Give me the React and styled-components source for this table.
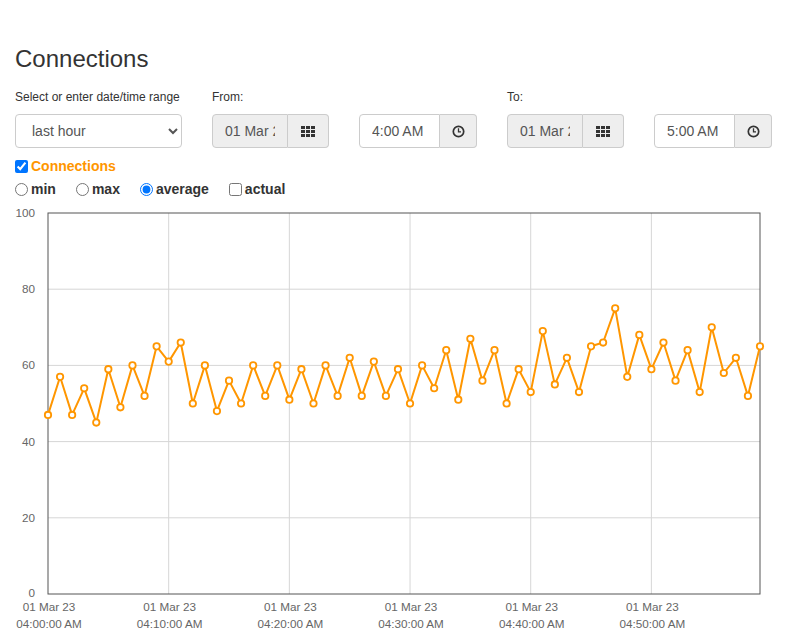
import React from 'react'
import styled, { createGlobalStyle } from 'styled-components'

const GlobalStyle = createGlobalStyle`
  body {
    margin: 0;
    background: #fff;
    color: #333;
    font-family: "Liberation Sans", Arial, sans-serif;
    font-size: 14px;
  }
`

const ORANGE = '#ff9600'

// one sample per minute, 04:00 .. 04:59
const values = [
  47, 57, 47, 54, 45, 59, 49, 60, 52, 65,
  61, 66, 50, 60, 48, 56, 50, 60, 52, 60,
  51, 59, 50, 60, 52, 62, 52, 61, 52, 59,
  50, 60, 54, 64, 51, 67, 56, 64, 50, 59,
  53, 69, 55, 62, 53, 65, 66, 75, 57, 68,
  59, 66, 56, 64, 53, 70, 58, 62, 52, 65,
]

const chart = {
  width: 757,
  height: 431,
  left: 33,
  right: 745,
  top: 10,
  bottom: 391,
}

const Page = styled.div`
  padding: 46px 15px 0;
`

const Title = styled.h2`
  margin: 0 0 17px;
  font-size: 24px;
  font-weight: 400;
  line-height: 26px;
  color: #333;
`

const Controls = styled.div`
  display: flex;
  align-items: flex-end;
  gap: 30px;
`

const Field = styled.div`
  display: flex;
  flex-direction: column;
`

const Label = styled.label`
  font-size: 12px;
  line-height: 17px;
  margin-bottom: 8px;
`

const Select = styled.select`
  width: 167px;
  height: 34px;
  box-sizing: border-box;
  padding: 6px 12px;
  border: 1px solid #ccc;
  border-radius: 4px;
  background: #fff;
  color: #555;
  font-family: inherit;
  font-size: 14px;
`

const InputGroup = styled.div`
  display: flex;
  height: 34px;
`

const Input = styled.input`
  width: ${p => p.$w}px;
  height: 34px;
  box-sizing: border-box;
  padding: 6px 12px;
  border: 1px solid #ccc;
  border-radius: 4px 0 0 4px;
  background: ${p => (p.$grey ? '#eee' : '#fff')};
  color: #555;
  font-family: inherit;
  font-size: 14px;
  outline: none;
`

const Addon = styled.span`
  width: ${p => p.$w}px;
  height: 34px;
  box-sizing: border-box;
  display: flex;
  align-items: center;
  justify-content: center;
  border: 1px solid #ccc;
  border-left: none;
  border-radius: 0 4px 4px 0;
  background: #eee;
  color: #333;
`

const SeriesRow = styled.div`
  display: flex;
  align-items: center;
  height: 20px;
  margin-top: 8px;
`

const Box = styled.input`
  width: 13px;
  height: 13px;
  margin: 0 3px 0 0;
`

const SeriesName = styled.label`
  color: ${ORANGE};
  font-weight: 700;
`

const Options = styled.div`
  display: flex;
  align-items: center;
  gap: 20px;
  height: 20px;
  margin-top: 3px;
`

const Option = styled.label`
  display: flex;
  align-items: center;
  font-weight: 700;
  color: #333;
`

const ChartSvg = styled.svg`
  display: block;
  margin-top: 4px;
  font-family: "Liberation Sans", Arial, sans-serif;
  font-size: 11.7px;
`

const GridIcon = () => (
  <svg width="14" height="11" viewBox="0 0 14 11">
    {[0, 1, 2].map(r =>
      [0, 1, 2].map(c => (
        <rect key={`${r}${c}`} x={c * 5} y={r * 4} width="4" height="3" fill="#333" />
      ))
    )}
  </svg>
)

const ClockIcon = () => (
  <svg width="13" height="13" viewBox="0 0 13 13">
    <circle cx="6.5" cy="6.5" r="5.2" fill="none" stroke="#333" strokeWidth="1.7" />
    <path d="M6.5 3.3 V6.8 H9" fill="none" stroke="#333" strokeWidth="1.3" />
  </svg>
)

function DateTime({ label, date, time }) {
  return (
    <>
      <Field>
        <Label>{label}</Label>
        <InputGroup>
          <Input $w={76} $grey readOnly value={date} />
          <Addon $w={41}><GridIcon /></Addon>
        </InputGroup>
      </Field>
      <Field>
        <InputGroup>
          <Input $w={81} readOnly value={time} />
          <Addon $w={37}><ClockIcon /></Addon>
        </InputGroup>
      </Field>
    </>
  )
}

function Chart() {
  const { left, right, top, bottom } = chart
  const px = i => left + (i * (right - left)) / (values.length - 1)
  const py = v => top + ((100 - v) * (bottom - top)) / 100
  const path = values.map((v, i) => `${i ? 'L' : 'M'}${px(i).toFixed(1)} ${py(v).toFixed(1)}`).join(' ')
  const ticks = [0, 10, 20, 30, 40, 50]

  return (
    <ChartSvg width={chart.width} height={chart.height}>
      {[20, 40, 60, 80].map(v => (
        <line key={v} x1={left} x2={right} y1={py(v)} y2={py(v)} stroke="#d6d6d6" />
      ))}
      {ticks.slice(1).map(m => (
        <line key={m} x1={px(m)} x2={px(m)} y1={top} y2={bottom} stroke="#d6d6d6" />
      ))}
      <rect x={left} y={top} width={right - left} height={bottom - top} fill="none" stroke="#555" />
      {[0, 20, 40, 60, 80, 100].map(v => (
        <text key={v} x={20} y={py(v) - (v === 0 ? 1 : 0)} dy="0.35em" textAnchor="end" fill="#666">{v}</text>
      ))}
      {ticks.map(m => (
        <g key={m} fill="#666" textAnchor="middle">
          <text x={px(m) + 1} y={bottom + 17}>01 Mar 23</text>
          <text x={px(m) + 1} y={bottom + 34}>{`04:${String(m).padStart(2, '0')}:00 AM`}</text>
        </g>
      ))}
      <path d={path} fill="none" stroke={ORANGE} strokeWidth="2" strokeLinejoin="round" />
      {values.map((v, i) => (
        <circle key={i} cx={px(i)} cy={py(v)} r="3.2" fill="#fff" stroke={ORANGE} strokeWidth="1.8" />
      ))}
    </ChartSvg>
  )
}

export default function App() {
  return (
    <Page>
      <GlobalStyle />
      <Title>Connections</Title>
      <Controls>
        <Field>
          <Label>Select or enter date/time range</Label>
          <Select defaultValue="hour">
            <option value="hour">last hour</option>
            <option value="day">last day</option>
            <option value="week">last week</option>
          </Select>
        </Field>
        <DateTime label="From:" date="01 Mar 2023" time="4:00 AM" />
        <DateTime label="To:" date="01 Mar 2023" time="5:00 AM" />
      </Controls>
      <SeriesRow>
        <Box type="checkbox" id="conn" defaultChecked />
        <SeriesName htmlFor="conn">Connections</SeriesName>
      </SeriesRow>
      <Options>
        <Option><Box type="radio" name="agg" />min</Option>
        <Option><Box type="radio" name="agg" />max</Option>
        <Option><Box type="radio" name="agg" defaultChecked />average</Option>
        <Option><Box type="checkbox" />actual</Option>
      </Options>
      <Chart />
    </Page>
  )
}
